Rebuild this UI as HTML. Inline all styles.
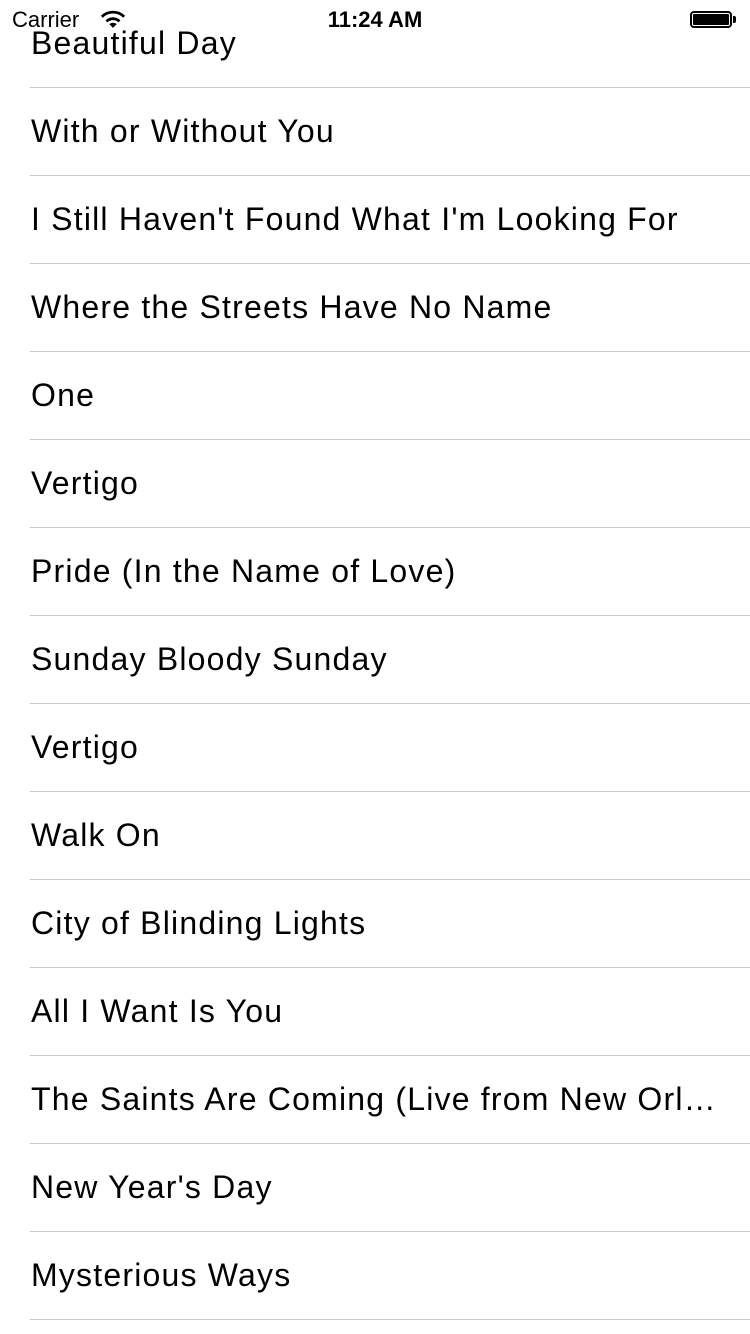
<!DOCTYPE html>
<html><head><meta charset="utf-8"><style>
body{margin:0;width:750px;height:1334px;background:#fff;position:relative;overflow:hidden;font-family:"Liberation Sans",sans-serif;color:#000}
.r{position:absolute;left:31px;width:690px;height:40px;line-height:40px;font-size:32px;letter-spacing:1.2px;white-space:nowrap;overflow:hidden;text-overflow:ellipsis}
.s{position:absolute;left:30px;right:0;height:1px;background:#c8c7cc}
.sb{position:absolute;top:8px;font-size:22px;line-height:24px}
</style></head><body>
<div class="sb" style="left:12px">Carrier</div>
<svg style="position:absolute;left:100px;top:10px" width="26" height="19" viewBox="0 0 28 20"><path d="M2 7a17 17 0 0 1 24 0" stroke="#000" stroke-width="3" fill="none"/><path d="M7 12a10 10 0 0 1 14 0" stroke="#000" stroke-width="3" fill="none"/><path d="M10 15l4 4 4-4a6 6 0 0 0-8 0z" fill="#000"/></svg>
<div class="sb" style="left:0;width:750px;text-align:center;font-weight:bold">11:24 AM</div>
<div style="position:absolute;left:690px;top:11px;width:42px;height:17px;border:2px solid #000;border-radius:4px;box-sizing:border-box;padding:1px"><div style="background:#000;width:100%;height:100%;border-radius:1px"></div></div>
<div style="position:absolute;left:733px;top:16px;width:3px;height:7px;background:#000;border-radius:0 2px 2px 0"></div>
<div class="r" style="top:23px">Beautiful Day</div>
<div class="s" style="top:87px"></div>
<div class="r" style="top:111px">With or Without You</div>
<div class="s" style="top:175px"></div>
<div class="r" style="top:199px">I Still Haven't Found What I'm Looking For</div>
<div class="s" style="top:263px"></div>
<div class="r" style="top:287px">Where the Streets Have No Name</div>
<div class="s" style="top:351px"></div>
<div class="r" style="top:375px">One</div>
<div class="s" style="top:439px"></div>
<div class="r" style="top:463px">Vertigo</div>
<div class="s" style="top:527px"></div>
<div class="r" style="top:551px">Pride (In the Name of Love)</div>
<div class="s" style="top:615px"></div>
<div class="r" style="top:639px">Sunday Bloody Sunday</div>
<div class="s" style="top:703px"></div>
<div class="r" style="top:727px">Vertigo</div>
<div class="s" style="top:791px"></div>
<div class="r" style="top:815px">Walk On</div>
<div class="s" style="top:879px"></div>
<div class="r" style="top:903px">City of Blinding Lights</div>
<div class="s" style="top:967px"></div>
<div class="r" style="top:991px">All I Want Is You</div>
<div class="s" style="top:1055px"></div>
<div class="r" style="top:1079px">The Saints Are Coming (Live from New Orleans)</div>
<div class="s" style="top:1143px"></div>
<div class="r" style="top:1167px">New Year's Day</div>
<div class="s" style="top:1231px"></div>
<div class="r" style="top:1255px">Mysterious Ways</div>
<div class="s" style="top:1319px"></div>
</body></html>
